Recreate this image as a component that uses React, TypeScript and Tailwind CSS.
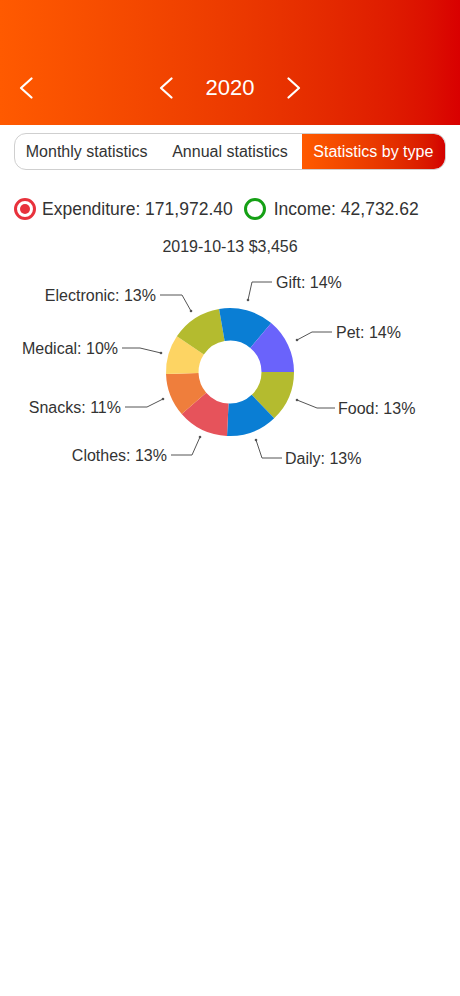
import React from 'react';

interface Slice {
  name: string;
  value: number;
  color: string;
}

const slices: Slice[] = [
  { name: 'Food', value: 13, color: '#b4bb2f' },
  { name: 'Daily', value: 13, color: '#0a7ed4' },
  { name: 'Clothes', value: 13, color: '#e6535b' },
  { name: 'Snacks', value: 11, color: '#ef7e3c' },
  { name: 'Medical', value: 10, color: '#fdd463' },
  { name: 'Electronic', value: 13, color: '#b4bb2f' },
  { name: 'Gift', value: 14, color: '#0a7ed4' },
  { name: 'Pet', value: 14, color: '#6a63fb' },
];

// leader lines: dot -> elbow -> end, then label
const labels = [
  { text: 'Gift: 14%', pts: [[248, 300], [252, 282], [272, 282]], anchor: 'start', tx: 276, ty: 282 },
  { text: 'Pet: 14%', pts: [[297, 340], [312, 332], [332, 332]], anchor: 'start', tx: 336, ty: 332 },
  { text: 'Food: 13%', pts: [[297, 400], [317, 408], [335, 408]], anchor: 'start', tx: 338, ty: 408 },
  { text: 'Daily: 13%', pts: [[256, 440], [262, 458], [282, 458]], anchor: 'start', tx: 285, ty: 458 },
  { text: 'Clothes: 13%', pts: [[200, 437], [192, 455], [171, 455]], anchor: 'end', tx: 167, ty: 455 },
  { text: 'Snacks: 11%', pts: [[163, 399], [147, 407], [125, 407]], anchor: 'end', tx: 121, ty: 407 },
  { text: 'Medical: 10%', pts: [[161, 353], [140, 348], [122, 348]], anchor: 'end', tx: 118, ty: 348 },
  { text: 'Electronic: 13%', pts: [[191, 311], [182, 295], [160, 295]], anchor: 'end', tx: 156, ty: 295 },
];

const CX = 230;
const CY = 372;
const R = 64;
const RI = 31.5;

function arcPath(a0: number, a1: number) {
  const p = (r: number, a: number) => `${(CX + r * Math.cos(a)).toFixed(2)} ${(CY + r * Math.sin(a)).toFixed(2)}`;
  const large = a1 - a0 > Math.PI ? 1 : 0;
  return `M ${p(R, a0)} A ${R} ${R} 0 ${large} 1 ${p(R, a1)} L ${p(RI, a1)} A ${RI} ${RI} 0 ${large} 0 ${p(RI, a0)} Z`;
}

function Chevron({ dir }: { dir: 'left' | 'right' }) {
  return (
    <svg width="14" height="22" viewBox="0 0 14 22" fill="none">
      <polyline
        points={dir === 'left' ? '12.5,1.5 2,11 12.5,20.5' : '1.5,1.5 12,11 1.5,20.5'}
        stroke="white"
        strokeWidth="2.2"
        strokeLinecap="round"
        strokeLinejoin="round"
      />
    </svg>
  );
}

export default function App() {
  const total = slices.reduce((s, x) => s + x.value, 0);
  let acc = 0;
  const arcs = slices.map((s) => {
    const a0 = (acc / total) * Math.PI * 2;
    acc += s.value;
    const a1 = (acc / total) * Math.PI * 2;
    return { ...s, d: arcPath(a0, a1) };
  });

  return (
    <div className="w-[460px] min-h-[996px] bg-white text-[#333]" style={{ fontFamily: '"Liberation Sans", Arial, sans-serif' }}>
      {/* Header */}
      <div className="h-[125px] bg-gradient-to-r from-[#ff5a00] to-[#d90000] pt-[66px]">
        <div className="grid grid-cols-[1fr_auto_1fr] items-center h-[44px]">
          <div className="pl-[19px] flex items-center">
            <Chevron dir="left" />
          </div>
          <div className="flex items-center gap-[33px]">
            <Chevron dir="left" />
            <span className="text-[22px] text-white leading-none">2020</span>
            <Chevron dir="right" />
          </div>
          <div />
        </div>
      </div>

      {/* Tabs */}
      <div className="mx-[14px] mt-2 h-[37px] flex border border-[#cfcfcf] rounded-[12px] overflow-hidden text-[16px]">
        <div className="flex-1 flex items-center justify-center">Monthly statistics</div>
        <div className="flex-1 flex items-center justify-center">Annual statistics</div>
        <div className="flex-1 flex items-center justify-center text-white bg-gradient-to-r from-[#ff5a00] to-[#d40000] rounded-r-[11px]">
          Statistics by type
        </div>
      </div>

      {/* Legend */}
      <div className="mt-[27px] h-[24px] flex items-center pl-[14px] text-[17.5px]">
        <span className="w-[22px] h-[22px] rounded-full border-[3px] border-[#e8323c] flex items-center justify-center">
          <span className="w-[10px] h-[10px] rounded-full bg-[#e8323c]" />
        </span>
        <span className="ml-[6px]">Expenditure: 171,972.40</span>
        <span className="ml-[11px] w-[22px] h-[22px] rounded-full border-[3px] border-[#15a015]" />
        <span className="ml-[8px]">Income: 42,732.62</span>
      </div>

      {/* Title */}
      <div className="mt-[14px] h-[24px] flex items-center justify-center text-[16px]">2019-10-13 $3,456</div>

      {/* Chart */}
      <svg width="460" height="230" viewBox="0 259 460 230" className="block">
        {arcs.map((a) => (
          <path key={a.name} d={a.d} fill={a.color} />
        ))}
        {labels.map((l) => (
          <g key={l.text}>
            <polyline points={l.pts.map((p) => p.join(',')).join(' ')} fill="none" stroke="#555" strokeWidth="1" />
            <circle cx={l.pts[0][0]} cy={l.pts[0][1]} r="1.3" fill="#555" />
            <text
              x={l.tx}
              y={l.ty}
              textAnchor={l.anchor as 'start' | 'end'}
              dominantBaseline="central"
              fontSize="16"
              fill="#333"
            >
              {l.text}
            </text>
          </g>
        ))}
      </svg>
    </div>
  );
}
